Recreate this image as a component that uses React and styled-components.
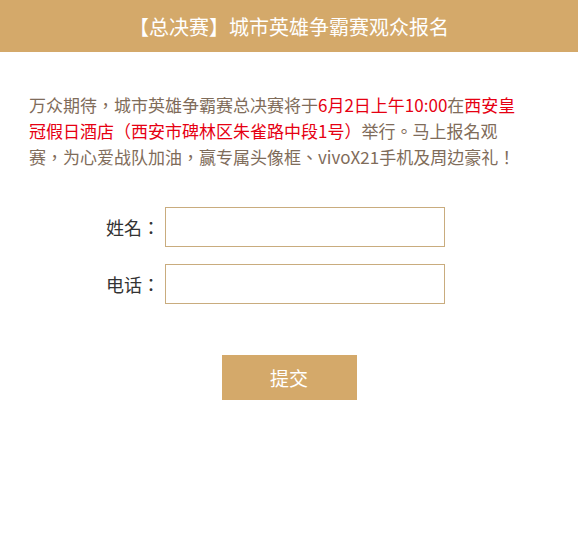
import styled, { createGlobalStyle } from "styled-components";

const GlobalStyle = createGlobalStyle`
	body {
		margin: 0;
		background: #fff;
		font-family: "Noto Sans CJK TC", "Noto Sans CJK SC", sans-serif;
	}
`;

const App = () => {
	return (
		<Page>
			<GlobalStyle />
			<Header>【总决赛】城市英雄争霸赛观众报名</Header>
			<Intro>
				万众期待，城市英雄争霸赛总决赛将于<Highlight>6月2日上午10:00</Highlight>在
				<Highlight>西安皇冠假日酒店（西安市碑林区朱雀路中段1号）</Highlight>举行。马上报名观赛，为心爱战队加油，赢专属头像框、vivoX21手机及周边豪礼！
			</Intro>
			<Form>
				<Row>
					<Label>姓名：</Label>
					<Input type="text" />
				</Row>
				<Row>
					<Label>电话：</Label>
					<Input type="tel" />
				</Row>
				<Submit type="button">提交</Submit>
			</Form>
		</Page>
	);
};

const Page = styled.div`
	width: 578px;
	min-height: 547px;
	background: #fff;
`;

const Header = styled.div`
	height: 52px;
	background: #d4a96a;
	color: #fff;
	font-family: "Noto Sans CJK SC", sans-serif;
	font-size: 20px;
	display: flex;
	align-items: center;
	justify-content: center;
`;

const Intro = styled.p`
	width: 492px;
	margin: 40px 0 0;
	padding: 0 0 0 29px;
	font-size: 17px;
	line-height: 26px;
	color: #7f6c5a;
`;

const Highlight = styled.span`
	color: #e60012;
`;

const Form = styled.div`
	margin-top: 37px;
	display: flex;
	flex-direction: column;
	align-items: center;
	gap: 17px;
`;

const Row = styled.div`
	align-self: flex-start;
	margin-left: 106px;
	display: flex;
	align-items: center;
`;

const Label = styled.span`
	width: 59px;
	font-size: 18px;
	color: #333;
`;

const Input = styled.input`
	box-sizing: border-box;
	width: 280px;
	height: 40px;
	border: 1px solid #c9ac7e;
	outline: none;
	padding: 0 8px;
	font-size: 16px;
`;

const Submit = styled.button`
	margin-top: 34px;
	width: 135px;
	height: 45px;
	border: none;
	background: #d4a96a;
	color: #fff;
	font-family: "Noto Sans CJK SC", sans-serif;
	font-size: 19px;
	cursor: pointer;
`;

export default App;
